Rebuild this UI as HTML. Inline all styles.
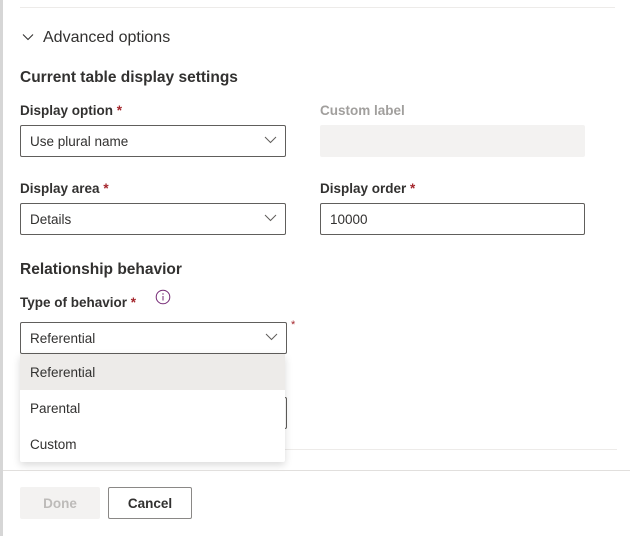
<!DOCTYPE html>
<html><head><style>
*{box-sizing:border-box;margin:0;padding:0}
body{width:630px;height:536px;background:#fff;font-family:"Liberation Sans",sans-serif;color:#323130;position:relative;overflow:hidden}
.a{position:absolute}
.lbl{font-size:13.5px;font-weight:bold;color:#323130}
.req{color:#a4262c}
.inp{position:absolute;border:1px solid #605e5c;border-radius:2px;background:#fff;font-size:13.5px;padding-left:9px;line-height:31px;height:32px}
.chev{position:absolute;right:8px;top:10px}
.item{position:absolute;left:0;width:265px;height:36px;line-height:37px;padding-left:10px;font-size:13.5px}
</style></head><body>
<div class="a" style="left:0;top:0;width:3px;height:536px;background:#d6d6d6"></div>
<div class="a" style="left:20px;top:7px;width:595px;height:1px;background:#edebe9"></div>
<svg class="a" style="left:22px;top:33px" width="12" height="8" viewBox="0 0 12 8"><path d="M1 1.5 L6 6.5 L11 1.5" fill="none" stroke="#323130" stroke-width="1.1"/></svg>
<div class="a" style="left:43px;top:29px;font-size:16px;color:#323130">Advanced options</div>
<div class="a" style="left:20px;top:69px;font-size:15.5px;font-weight:bold">Current table display settings</div>

<div class="a lbl" style="left:20px;top:103px">Display option <span class="req">*</span></div>
<div class="inp" style="left:20px;top:125px;width:266px">Use plural name<svg class="chev" width="13" height="8" viewBox="0 0 13 8"><path d="M1 1 L6.5 6.5 L12 1" fill="none" stroke="#605e5c" stroke-width="1"/></svg></div>
<div class="a lbl" style="left:320px;top:103px;color:#a19f9d">Custom label</div>
<div class="a" style="left:320px;top:125px;width:265px;height:32px;background:#f3f2f1;border-radius:2px"></div>

<div class="a lbl" style="left:20px;top:181px">Display area <span class="req">*</span></div>
<div class="inp" style="left:20px;top:203px;width:266px">Details<svg class="chev" width="13" height="8" viewBox="0 0 13 8"><path d="M1 1 L6.5 6.5 L12 1" fill="none" stroke="#605e5c" stroke-width="1"/></svg></div>
<div class="a lbl" style="left:320px;top:181px">Display order <span class="req">*</span></div>
<div class="inp" style="left:320px;top:203px;width:265px">10000</div>

<div class="a" style="left:20px;top:261px;font-size:15.5px;font-weight:bold">Relationship behavior</div>
<div class="a lbl" style="left:20px;top:295px">Type of behavior <span class="req">*</span></div>
<svg class="a" style="left:155px;top:289px" width="16" height="16" viewBox="0 0 16 16"><circle cx="8" cy="8" r="6.8" fill="none" stroke="#742774" stroke-width="1"/><rect x="7.5" y="7" width="1" height="4.5" fill="#742774"/><circle cx="8" cy="5" r="0.7" fill="#742774"/></svg>
<div class="inp" style="left:20px;top:322px;width:267px">Referential<svg class="chev" width="13" height="8" viewBox="0 0 13 8"><path d="M1 1 L6.5 6.5 L12 1" fill="none" stroke="#605e5c" stroke-width="1"/></svg></div>
<div class="a req" style="left:291px;top:319px;font-size:11px">*</div>

<div class="a" style="left:20px;top:397px;width:267px;height:32px;border:1px solid #605e5c;border-radius:2px"></div>
<div class="a" style="left:285px;top:449px;width:332px;height:1px;background:#edebe9"></div>
<div class="a" style="left:20px;top:354px;width:265px;height:108px;background:#fff;box-shadow:0 3px 8px rgba(0,0,0,.15);border-radius:0 0 2px 2px">
<div class="item" style="top:0;background:#edebe9">Referential</div>
<div class="item" style="top:36px">Parental</div>
<div class="item" style="top:72px">Custom</div>
</div>

<div class="a" style="left:3px;top:470px;width:627px;height:1px;background:#e1dfdd"></div>
<div class="a" style="left:20px;top:487px;width:80px;height:32px;background:#f3f2f1;color:#bdbbb9;font-size:13.5px;font-weight:bold;text-align:center;line-height:33px;border-radius:2px">Done</div>
<div class="a" style="left:108px;top:487px;width:84px;height:32px;border:1px solid #8a8886;color:#323130;font-size:13.5px;font-weight:bold;text-align:center;line-height:31px;border-radius:2px">Cancel</div>
</body></html>
